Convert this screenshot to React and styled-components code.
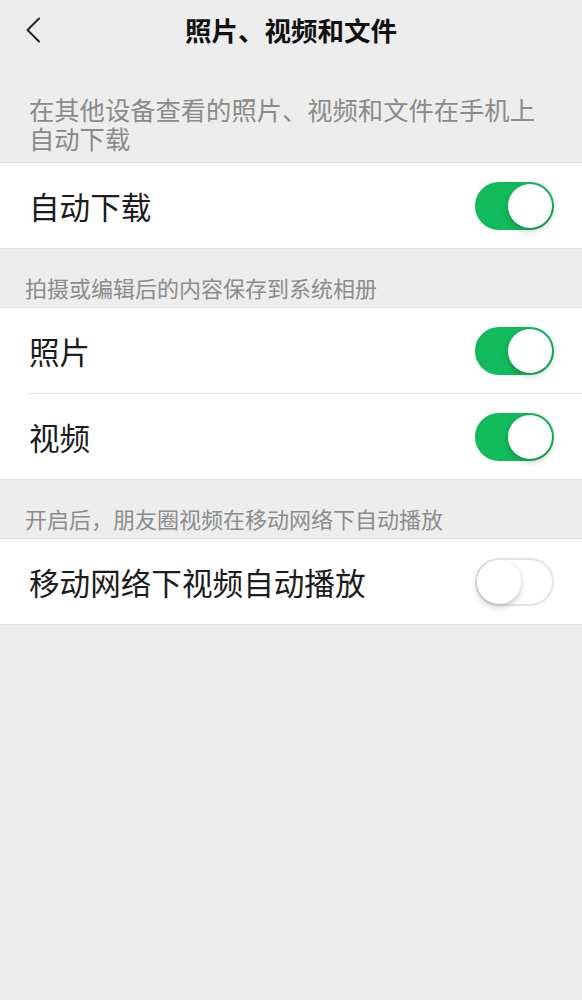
import React, { useState } from "react";
import styled, { createGlobalStyle } from "styled-components";

const GlobalStyle = createGlobalStyle`
  html, body {
    margin: 0;
    padding: 0;
    background: #ededed;
  }
  body {
    font-family: "Noto Sans CJK SC", "Noto Sans", sans-serif;
    -webkit-font-smoothing: antialiased;
  }
`;

const Page = styled.div`
  min-height: 1000px;
  background-color: #ededed;
`;

const Header = styled.div`
  display: grid;
  grid-template-columns: 60px 1fr 60px;
  align-items: center;
  height: 60px;
`;

const BackButton = styled.button`
  display: flex;
  align-items: center;
  justify-content: flex-start;
  padding: 0 0 0 25px;
  height: 60px;
  border: none;
  background: none;
  cursor: pointer;
`;

const Title = styled.h1`
  margin: 0;
  font-size: 26.5px;
  font-weight: 700;
  color: #111;
  text-align: center;
  line-height: 1;
`;

const Description = styled.p`
  margin: 0;
  padding: 35px 40px 9px 29px;
  font-size: 25.3px;
  line-height: 29px;
  color: #8a8a8a;
`;

const SectionLabel = styled.div`
  padding: 26px 25px 8px;
  font-size: 22px;
  line-height: 24px;
  color: #8c8c8c;
`;

const Section = styled.div`
  background: #fff;
  border-top: 1px solid #e2e2e2;
  border-bottom: 1px solid #e2e2e2;
`;

const Row = styled.div`
  display: flex;
  align-items: center;
  justify-content: space-between;
  height: 85px;
  padding: 0 28px 0 29px;

  & + & {
    border-top: 1px solid #e5e5e5;
    margin-left: 29px;
    padding-left: 0;
  }
`;

const RowText = styled.span`
  font-size: 30.6px;
  color: #1c1c1c;
`;

const Track = styled.button`
  position: relative;
  width: 79px;
  height: 48px;
  padding: 0;
  border-radius: 24px;
  border: 2px solid ${(p) => (p.$on ? "#12b95a" : "#e4e4e4")};
  background: ${(p) => (p.$on ? "#12bb5b" : "#fff")};
  cursor: pointer;
  transition: background-color 0.2s;
`;

const Knob = styled.span`
  position: absolute;
  top: 0;
  left: ${(p) => (p.$on ? "31px" : "0")};
  width: 44px;
  height: 44px;
  border-radius: 50%;
  background: #fff;
  box-shadow: 0 3px 6px rgba(0, 0, 0, 0.22);
  transition: left 0.2s;
`;

const Toggle = ({ on, onChange }) => (
  <Track $on={on} onClick={onChange}>
    <Knob $on={on} />
  </Track>
);

const App = () => {
  const [settings, setSettings] = useState({
    autoDownload: true,
    photo: true,
    video: true,
    autoPlay: false,
  });

  const flip = (key) => setSettings({ ...settings, [key]: !settings[key] });

  return (
    <Page>
      <GlobalStyle />
      <Header>
        <BackButton>
          <svg width="16" height="26" viewBox="0 0 16 26" fill="none">
            <path d="M14 1.5 L2.5 13 L14 24.5" stroke="#222" strokeWidth="2" strokeLinecap="round" strokeLinejoin="round" />
          </svg>
        </BackButton>
        <Title>照片、视频和文件</Title>
        <div />
      </Header>

      <Description>在其他设备查看的照片、视频和文件在手机上自动下载</Description>
      <Section>
        <Row>
          <RowText>自动下载</RowText>
          <Toggle on={settings.autoDownload} onChange={() => flip("autoDownload")} />
        </Row>
      </Section>

      <SectionLabel>拍摄或编辑后的内容保存到系统相册</SectionLabel>
      <Section>
        <Row>
          <RowText>照片</RowText>
          <Toggle on={settings.photo} onChange={() => flip("photo")} />
        </Row>
        <Row>
          <RowText>视频</RowText>
          <Toggle on={settings.video} onChange={() => flip("video")} />
        </Row>
      </Section>

      <SectionLabel>开启后，朋友圈视频在移动网络下自动播放</SectionLabel>
      <Section>
        <Row>
          <RowText>移动网络下视频自动播放</RowText>
          <Toggle on={settings.autoPlay} onChange={() => flip("autoPlay")} />
        </Row>
      </Section>
    </Page>
  );
};

export default App;
